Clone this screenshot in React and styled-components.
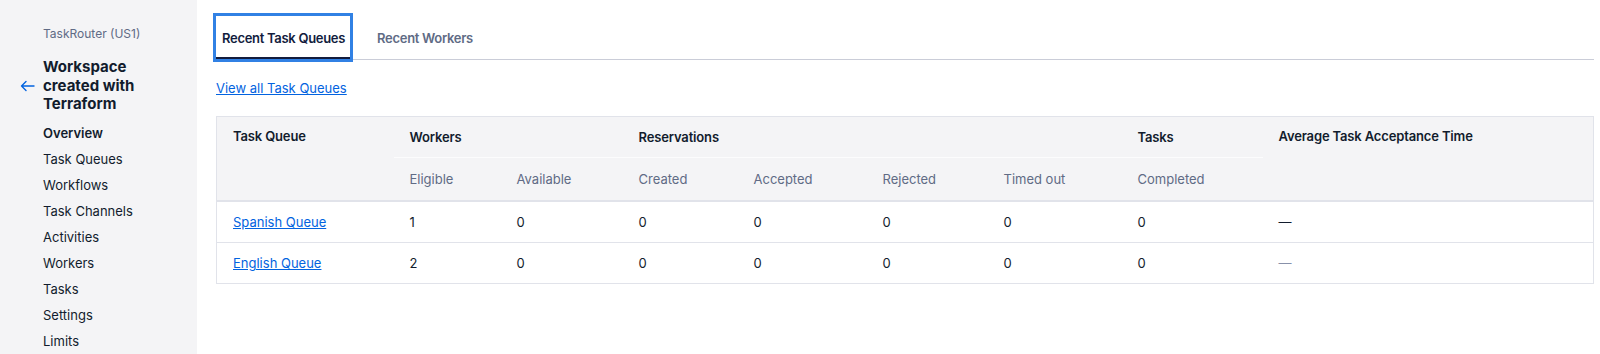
import styled, { createGlobalStyle } from 'styled-components';

const Global = createGlobalStyle`
  html, body {
    margin: 0;
    padding: 0;
    background: #ffffff;
    font-family: Inter, "Noto Sans", "Liberation Sans", sans-serif;
    color: #121c2d;
  }
`

const Page = styled.div`
  display: flex;
  width: 1600px;
  height: 354px;
  overflow: hidden;
`

const Sidebar = styled.nav`
  width: 197px;
  flex-shrink: 0;
  background: #f4f4f6;
  padding: 26px 0 0 20px;
  box-sizing: border-box;
`

const Product = styled.div`
  padding-left: 23px;
  font-size: 12px;
  line-height: 16px;
  color: #606b85;
`

const TitleRow = styled.div`
  display: flex;
  align-items: center;
  gap: 8px;
  margin-top: 16px;
`

const Title = styled.h1`
  margin: 0;
  font-size: 15px;
  line-height: 18.5px;
  font-weight: 700;
  color: #121c2d;
`

const NavList = styled.ul`
  list-style: none;
  margin: 6px 0 0;
  padding: 0 0 0 23px;
`

const NavItem = styled.li`
  font-size: 13px;
  line-height: 26px;
  font-weight: ${p => (p.$active ? 600 : 400)};
  color: #121c2d;
`

const Main = styled.main`
  flex: 1;
  padding: 16px 7px 0 19px;
`

const TabList = styled.div`
  display: flex;
  gap: 21px;
  border-bottom: 1px solid #cacdd8;
`

const Tab = styled.div`
  height: 43px;
  box-sizing: border-box;
  display: flex;
  align-items: center;
  padding: 2px 5px 0 6px;
  font-size: 13px;
  font-weight: 600;
  letter-spacing: -0.3px;
  color: ${p => (p.$active ? '#121c3d' : '#606b85')};
  background: #ffffff;
  border-bottom: 2px solid ${p => (p.$active ? '#121c3d' : 'transparent')};
  box-shadow: ${p => (p.$active ? '0 0 0 3px #3181e4' : 'none')};
`

const ViewAll = styled.a`
  display: inline-block;
  margin-top: 18px;
  font-size: 13px;
  line-height: 20px;
  color: #0263e0;
  text-decoration: underline;
`

const Table = styled.table`
  margin-top: 18px;
  width: 1377px;
  table-layout: fixed;
  border-collapse: collapse;
  border: 1px solid #e1e3ea;
  font-size: 13px;
`

const Head = styled.thead`
  background: #f4f4f6;
  border-bottom: 2px solid #e1e3ea;
`

const Th = styled.th`
  height: ${p => (p.$sub ? '42px' : '40px')};
  padding: ${p => (p.$span ? '11px 16px 0' : '0 16px')};
  text-align: left;
  vertical-align: ${p => (p.$span ? 'top' : 'middle')};
  font-weight: ${p => (p.$sub ? 400 : 600)};
  letter-spacing: ${p => (p.$sub ? '0' : '-0.15px')};
  color: ${p => (p.$sub ? '#606b85' : '#121c2d')};
  border-bottom: ${p => (p.$group ? '1px solid #fcfcfd' : 'none')};
  white-space: nowrap;
`

const Row = styled.tr`
  border-bottom: 1px solid #e1e3ea;
`

const Td = styled.td`
  height: 40px;
  padding: 0 16px;
  color: ${p => (p.$muted ? '#8891aa' : '#121c2d')};
`

const QueueLink = styled.a`
  color: #0263e0;
  text-decoration: underline;
`

const widths = [177, 107, 122, 115, 129, 121, 134, 141, 331];

const queues = [
  { name: 'Spanish Queue', values: [1, 0, 0, 0, 0, 0, 0], muted: false },
  { name: 'English Queue', values: [2, 0, 0, 0, 0, 0, 0], muted: true },
];

const nav = ['Overview', 'Task Queues', 'Workflows', 'Task Channels', 'Activities', 'Workers', 'Tasks', 'Settings', 'Limits'];

function BackArrow() {
  return (
    <svg width="15" height="12" viewBox="0 0 15 12" fill="none" stroke="#0263e0" strokeWidth="1.4" strokeLinecap="round" strokeLinejoin="round">
      <path d="M14 6H1.5M6 1.5L1.5 6L6 10.5" />
    </svg>
  );
}

export default function App() {
  return (
    <Page>
      <Global />
      <Sidebar>
        <Product>TaskRouter (US1)</Product>
        <TitleRow>
          <BackArrow />
          <Title>Workspace<br />created with<br />Terraform</Title>
        </TitleRow>
        <NavList>
          {nav.map((n, i) => <NavItem key={n} $active={i === 0}>{n}</NavItem>)}
        </NavList>
      </Sidebar>
      <Main>
        <TabList>
          <Tab $active>Recent Task Queues</Tab>
          <Tab>Recent Workers</Tab>
        </TabList>
        <ViewAll href="#">View all Task Queues</ViewAll>
        <Table>
          <colgroup>
            {widths.map((w, i) => <col key={i} style={{ width: w }} />)}
          </colgroup>
          <Head>
            <tr>
              <Th rowSpan={2} $span>Task Queue</Th>
              <Th colSpan={2} $group>Workers</Th>
              <Th colSpan={4} $group>Reservations</Th>
              <Th $group>Tasks</Th>
              <Th rowSpan={2} $span>Average Task Acceptance Time</Th>
            </tr>
            <tr>
              <Th $sub>Eligible</Th>
              <Th $sub>Available</Th>
              <Th $sub>Created</Th>
              <Th $sub>Accepted</Th>
              <Th $sub>Rejected</Th>
              <Th $sub>Timed out</Th>
              <Th $sub>Completed</Th>
            </tr>
          </Head>
          <tbody>
            {queues.map(q => (
              <Row key={q.name}>
                <Td><QueueLink href="#">{q.name}</QueueLink></Td>
                {q.values.map((v, i) => <Td key={i}>{v}</Td>)}
                <Td $muted={q.muted}>—</Td>
              </Row>
            ))}
          </tbody>
        </Table>
      </Main>
    </Page>
  );
}
